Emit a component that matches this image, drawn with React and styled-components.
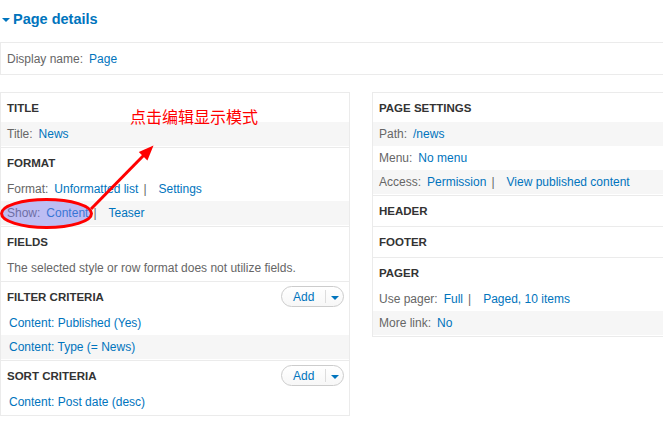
import React from "react";
import styled, { createGlobalStyle } from "styled-components";

const GlobalStyle = createGlobalStyle`
  html, body {
    margin: 0;
    padding: 0;
    background: #ffffff;
    overflow: hidden;
  }
  body {
    font-family: "Liberation Sans", Arial, sans-serif;
    font-size: 12px;
    color: #666666;
  }
  * { box-sizing: border-box; }
`;

const Page = styled.div`
  position: relative;
  width: 663px;
  height: 422px;
  overflow: hidden;
`;

const Legend = styled.div`
  display: flex;
  align-items: center;
  height: 38px;
  margin-bottom: 4px;
  padding-left: 2px;
  color: #0074bd;
  font-weight: bold;
  font-size: 14.5px;
`;

const Caret = styled.span`
  display: inline-block;
  width: 0;
  height: 0;
  border-left: 4px solid transparent;
  border-right: 4px solid transparent;
  border-top: 4px solid #0074bd;
  margin: 2px 3px 0 0;
`;

const DisplayBox = styled.div`
  display: flex;
  align-items: center;
  width: 722px;
  height: 33px;
  padding: 0 6px;
  border: 1px solid #ebebeb;
`;

const Columns = styled.div`
  display: flex;
  align-items: flex-start;
  gap: 22px;
  width: 722px;
  margin-top: 17px;
`;

const Column = styled.div`
  flex: 0 0 350px;
  border: 1px solid #ebebeb;
  border-bottom: none;
`;

const Section = styled.div`
  padding-bottom: 1px;
  border-bottom: 1px solid #ebebeb;
`;

const SectionHead = styled.div`
  display: flex;
  align-items: center;
  justify-content: space-between;
  height: 29px;
  padding: 0 5px 0 6px;
  color: #333333;
  font-weight: bold;
  font-size: 11.5px;
  text-transform: uppercase;
`;

const Row = styled.div`
  display: flex;
  align-items: center;
  height: 24px;
  padding: 0 6px 0 ${(p) => (p.$indent ? 8 : 6)}px;
  background: ${(p) => (p.$striped ? "#f6f6f6" : "transparent")};
  white-space: nowrap;
`;

const Label = styled.span`
  color: #666666;
  margin-right: 6px;
`;

const Link = styled.span`
  color: #0074bd;
`;

const Sep = styled.span`
  color: #666666;
  margin: 0 12px 0 5px;
`;

const DropButton = styled.div`
  display: flex;
  align-items: center;
  height: 21px;
  width: 63px;
  border: 1px solid #cccccc;
  border-radius: 11px;
  background: linear-gradient(#ffffff, #f7f7f7);
  text-transform: none;
  font-weight: normal;
`;

const DropLabel = styled.span`
  color: #0074bd;
  font-size: 12px;
  padding-left: 11px;
  width: 43px;
`;

const DropDivider = styled.span`
  width: 1px;
  height: 13px;
  background: #dddddd;
`;

const DropCaret = styled.span`
  width: 0;
  height: 0;
  margin: 2px 0 0 5px;
  border-left: 4px solid transparent;
  border-right: 4px solid transparent;
  border-top: 4px solid #0074bd;
`;

const Overlay = styled.svg`
  position: absolute;
  left: 0;
  top: 0;
  pointer-events: none;
`;

const Note = styled.div`
  position: absolute;
  left: 130px;
  top: 105px;
  line-height: 22px;
  font-size: 16px;
  color: #ff0000;
  font-family: "Noto Sans CJK SC", "Noto Sans", sans-serif;
`;

function AddButton() {
  return (
    <DropButton>
      <DropLabel>Add</DropLabel>
      <DropDivider />
      <DropCaret />
    </DropButton>
  );
}

export default function App() {
  return (
    <>
      <GlobalStyle />
      <Page>
        <Legend>
          <Caret />
          Page details
        </Legend>
        <DisplayBox>
          <Label>Display name:</Label>
          <Link>Page</Link>
        </DisplayBox>
        <Columns>
          <Column>
            <Section>
              <SectionHead>Title</SectionHead>
              <Row $striped>
                <Label>Title:</Label>
                <Link>News</Link>
              </Row>
            </Section>
            <Section>
              <SectionHead>Format</SectionHead>
              <Row>
                <Label>Format:</Label>
                <Link>Unformatted list</Link>
                <Sep>|</Sep>
                <Link>Settings</Link>
              </Row>
              <Row $striped>
                <Label>Show:</Label>
                <Link>Content</Link>
                <Sep>|</Sep>
                <Link>Teaser</Link>
              </Row>
            </Section>
            <Section>
              <SectionHead>Fields</SectionHead>
              <Row>The selected style or row format does not utilize fields.</Row>
            </Section>
            <Section>
              <SectionHead>
                Filter criteria
                <AddButton />
              </SectionHead>
              <Row $indent>
                <Link>Content: Published (Yes)</Link>
              </Row>
              <Row $indent $striped>
                <Link>Content: Type (= News)</Link>
              </Row>
            </Section>
            <Section>
              <SectionHead>
                Sort criteria
                <AddButton />
              </SectionHead>
              <Row $indent>
                <Link>Content: Post date (desc)</Link>
              </Row>
            </Section>
          </Column>
          <Column>
            <Section>
              <SectionHead>Page settings</SectionHead>
              <Row $striped>
                <Label>Path:</Label>
                <Link>/news</Link>
              </Row>
              <Row>
                <Label>Menu:</Label>
                <Link>No menu</Link>
              </Row>
              <Row $striped>
                <Label>Access:</Label>
                <Link>Permission</Link>
                <Sep>|</Sep>
                <Link>View published content</Link>
              </Row>
            </Section>
            <Section>
              <SectionHead>Header</SectionHead>
            </Section>
            <Section>
              <SectionHead>Footer</SectionHead>
            </Section>
            <Section>
              <SectionHead>Pager</SectionHead>
              <Row>
                <Label>Use pager:</Label>
                <Link>Full</Link>
                <Sep>|</Sep>
                <Link>Paged, 10 items</Link>
              </Row>
              <Row $striped>
                <Label>More link:</Label>
                <Link>No</Link>
              </Row>
            </Section>
          </Column>
        </Columns>
        <Overlay width="663" height="422" viewBox="0 0 663 422">
          <ellipse
            cx="46.5"
            cy="213.5"
            rx="45"
            ry="14"
            fill="rgba(120,120,240,0.45)"
            stroke="#ff0000"
            strokeWidth="3"
          />
          <line x1="91" y1="209" x2="145" y2="154" stroke="#ff0000" strokeWidth="3" />
          <polygon points="153.5,145.5 147.4,160.5 138.8,152.1" fill="#ff0000" />
        </Overlay>
        <Note>点击编辑显示模式</Note>
      </Page>
    </>
  );
}
